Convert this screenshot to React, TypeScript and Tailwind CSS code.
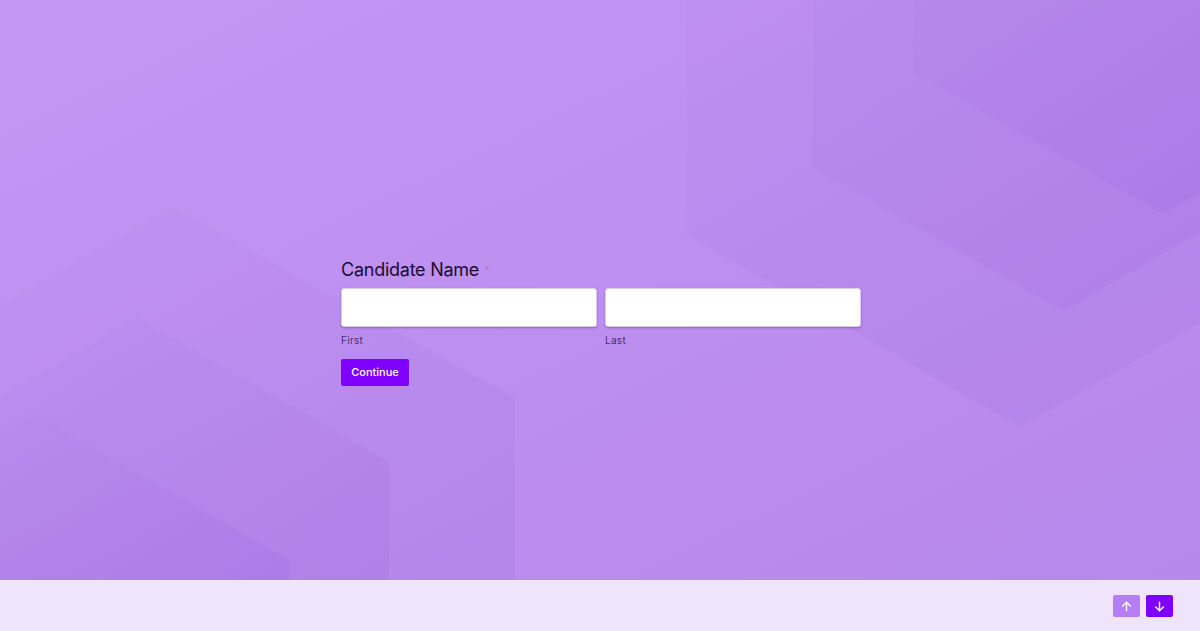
import React from "react";

function Backdrop() {
  return (
    <svg
      className="absolute inset-0 h-full w-full"
      viewBox="0 0 1200 580"
      preserveAspectRatio="none"
      aria-hidden="true"
    >
      <defs>
        <linearGradient id="hexTR" x1="0" y1="0" x2="1" y2="1">
          <stop offset="0" stopColor="#5b21b6" stopOpacity="0.025" />
          <stop offset="1" stopColor="#5b21b6" stopOpacity="0.06" />
        </linearGradient>
        <linearGradient id="hexBL" x1="0" y1="0" x2="1" y2="1">
          <stop offset="0" stopColor="#5b21b6" stopOpacity="0.015" />
          <stop offset="1" stopColor="#5b21b6" stopOpacity="0.06" />
        </linearGradient>
      </defs>
      {/* upper right cluster */}
      <polygon points="687,0 687,235 1020,427 1200,323 1200,0" fill="url(#hexTR)" />
      <polygon points="813,0 813,168 1063,311 1200,232 1200,0" fill="url(#hexTR)" />
      <polygon points="913,0 913,72 1163,214 1200,193 1200,0" fill="url(#hexTR)" />
      {/* lower left cluster */}
      <polygon points="0,305 172,206 515,398 515,580 0,580" fill="url(#hexBL)" />
      <polygon points="0,398 138,318 389,462 389,580 0,580" fill="url(#hexBL)" />
      <polygon points="0,437 37,416 289,560 289,580 0,580" fill="url(#hexBL)" />
    </svg>
  );
}

function ArrowUp() {
  return (
    <svg width="13" height="13" viewBox="0 0 24 24" fill="none" stroke="white" strokeWidth="2.6" strokeLinecap="round" strokeLinejoin="round">
      <path d="M12 20V4" />
      <path d="M5 11l7-7 7 7" />
    </svg>
  );
}

function ArrowDown() {
  return (
    <svg width="13" height="13" viewBox="0 0 24 24" fill="none" stroke="white" strokeWidth="2.6" strokeLinecap="round" strokeLinejoin="round">
      <path d="M12 4v16" />
      <path d="M5 13l7 7 7-7" />
    </svg>
  );
}

export default function App() {
  return (
    <div
      className="flex h-[631px] w-[1200px] flex-col overflow-hidden"
      style={{ fontFamily: "Inter, 'Noto Sans', sans-serif" }}
    >
      <main className="relative h-[580px] bg-gradient-to-br from-[#c497f5] via-[#bd8ff0] to-[#b788eb]">
        <Backdrop />
        <div className="relative mx-auto w-[522px] pl-[2px] pt-[259px]">
          <div className="flex items-start gap-[6px]">
            <h1 className="text-[18px] leading-[22px] font-normal tracking-[-0.25px] text-[#1b0c33]">
              Candidate Name
            </h1>
            <span className="mt-[6px] text-[8px] leading-none text-[#c86aa6]">*</span>
          </div>
          <div className="mt-[7px] grid grid-cols-2 gap-[8px]">
            <div>
              <input
                className="block h-[39px] w-full rounded-[3px] border border-[#d9cde6] bg-white shadow-[0_1px_2px_rgba(60,20,100,0.35)] outline-none"
                aria-label="First"
              />
              <div className="mt-[6px] text-[10px] leading-[14px] tracking-[0.3px] text-[#4b2f68]">First</div>
            </div>
            <div>
              <input
                className="block h-[39px] w-full rounded-[3px] border border-[#d9cde6] bg-white shadow-[0_1px_2px_rgba(60,20,100,0.35)] outline-none"
                aria-label="Last"
              />
              <div className="mt-[6px] text-[10px] leading-[14px] tracking-[0.3px] text-[#4b2f68]">Last</div>
            </div>
          </div>
          <button className="mt-[12px] flex h-[27px] w-[68px] items-center justify-center rounded-[2px] bg-[#7f00fe] text-[11px] font-medium text-white">
            Continue
          </button>
        </div>
      </main>
      <footer className="flex h-[51px] items-center justify-end gap-[6px] bg-[#f0e4fc] pr-[27px] pt-px">
        <button className="flex h-[22px] w-[27px] items-center justify-center rounded-[2px] bg-[#b57ef5]" aria-label="Previous">
          <ArrowUp />
        </button>
        <button className="flex h-[22px] w-[27px] items-center justify-center rounded-[2px] bg-[#8000ff]" aria-label="Next">
          <ArrowDown />
        </button>
      </footer>
    </div>
  );
}
